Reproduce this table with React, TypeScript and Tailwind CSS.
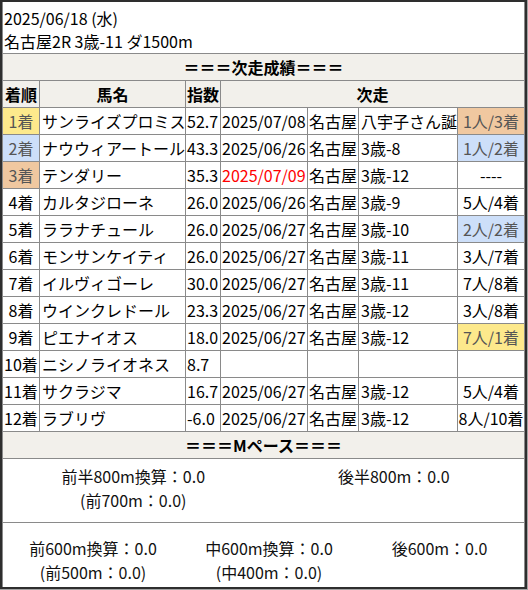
import React from "react";

type Row = {
  rank: string;
  rankBg?: string;
  name: string;
  idx: string;
  date?: string;
  dateRed?: boolean;
  place?: string;
  race?: string;
  res?: string;
  resBg?: string;
};

const Y = "bg-[#fde98c]";
const B = "bg-[#cddff9]";
const T = "bg-[#f0c8a0]";

const rows: Row[] = [
  { rank: "1着", rankBg: Y, name: "サンライズプロミス", idx: "52.7", date: "2025/07/08", place: "名古屋", race: "八宇子さん誕", res: "1人/3着", resBg: T },
  { rank: "2着", rankBg: B, name: "ナウウィアートール", idx: "43.3", date: "2025/06/26", place: "名古屋", race: "3歳-8", res: "1人/2着", resBg: B },
  { rank: "3着", rankBg: T, name: "テンダリー", idx: "35.3", date: "2025/07/09", dateRed: true, place: "名古屋", race: "3歳-12", res: "----" },
  { rank: "4着", name: "カルタジローネ", idx: "26.0", date: "2025/06/26", place: "名古屋", race: "3歳-9", res: "5人/4着" },
  { rank: "5着", name: "ララナチュール", idx: "26.0", date: "2025/06/27", place: "名古屋", race: "3歳-10", res: "2人/2着", resBg: B },
  { rank: "6着", name: "モンサンケイティ", idx: "26.0", date: "2025/06/27", place: "名古屋", race: "3歳-11", res: "3人/7着" },
  { rank: "7着", name: "イルヴィゴーレ", idx: "30.0", date: "2025/06/27", place: "名古屋", race: "3歳-11", res: "7人/8着" },
  { rank: "8着", name: "ウインクレドール", idx: "23.3", date: "2025/06/27", place: "名古屋", race: "3歳-12", res: "3人/8着" },
  { rank: "9着", name: "ピエナイオス", idx: "18.0", date: "2025/06/27", place: "名古屋", race: "3歳-12", res: "7人/1着", resBg: Y },
  { rank: "10着", name: "ニシノライオネス", idx: "8.7" },
  { rank: "11着", name: "サクラジマ", idx: "16.7", date: "2025/06/27", place: "名古屋", race: "3歳-12", res: "5人/4着" },
  { rank: "12着", name: "ラブリヴ", idx: "-6.0", date: "2025/06/27", place: "名古屋", race: "3歳-12", res: "8人/10着" },
];

const cell = "h-full flex items-center border-r border-[#8a8a8a] whitespace-nowrap overflow-hidden";

export default function App() {
  return (
    <div
      className="w-[528px] h-[590px] bg-[#a3a3a3] pr-px pb-px text-[16px] text-black"
      style={{ fontFamily: '"Noto Sans CJK JP", "Noto Sans", sans-serif' }}
    >
      <div className="h-full border-2 border-[#2e2e2e] bg-white">
        <div className="h-full border-l border-r border-[#8a8a8a] flex flex-col">
          {/* header */}
          <div className="h-[52px] border-b border-[#8a8a8a] pl-px pt-[5px] leading-[23px]">
            <div>2025/06/18 (水)</div>
            <div>名古屋2R 3歳-11 ダ1500m</div>
          </div>
          <div className="h-[27px] border-b border-[#8a8a8a] bg-[#f2f0eb] flex items-center justify-center font-bold">
            ＝＝＝次走成績＝＝＝
          </div>
          <div className="h-[27px] border-b border-[#8a8a8a] bg-[#f2f0eb] flex font-bold">
            <div className={`${cell} w-[37px] justify-center`}>着順</div>
            <div className={`${cell} w-[146px] justify-center`}>馬名</div>
            <div className={`${cell} w-[35px] justify-center`}>指数</div>
            <div className="h-full flex-1 flex items-center justify-center">次走</div>
          </div>
          {rows.map((r, i) => (
            <div key={i} className="h-[27px] border-b border-[#8a8a8a] flex">
              <div className={`${cell} w-[37px] justify-center ${r.rankBg ?? ""} ${r.rankBg ? "text-[#555]" : ""}`}>
                {r.rank}
              </div>
              <div className={`${cell} w-[146px] pl-[2px]`}>{r.name}</div>
              <div className={`${cell} w-[35px] pl-px`}>{r.idx}</div>
              <div className={`${cell} w-[87px] pl-px ${r.dateRed ? "text-[#ff0000]" : ""}`}>{r.date ?? ""}</div>
              <div className={`${cell} w-[51px] pl-px`}>{r.place ?? ""}</div>
              <div className={`${cell} w-[99px] pl-[2px]`}>{r.race ?? ""}</div>
              <div
                className={`h-full flex-1 flex items-center justify-center whitespace-nowrap overflow-hidden ${r.resBg ?? ""} ${r.resBg ? "text-[#555]" : ""}`}
              >
                {r.res ?? ""}
              </div>
            </div>
          ))}
          <div className="h-[27px] border-b border-[#8a8a8a] bg-[#f2f0eb] flex items-center justify-center font-bold">
            ＝＝＝Mペース＝＝＝
          </div>
          <div className="h-[64px] border-b border-[#8a8a8a] grid grid-cols-2 pt-[5px] leading-[24px] text-[#111]">
            <div className="flex flex-col items-center">
              <div>前半800m換算：0.0</div>
              <div>(前700m：0.0)</div>
            </div>
            <div className="flex flex-col items-center">
              <div>後半800m：0.0</div>
            </div>
          </div>
          <div className="flex-1 grid grid-cols-[180px_172px_1fr] pt-[13px] leading-[24px] text-[#111]">
            <div className="flex flex-col items-center">
              <div>前600m換算：0.0</div>
              <div>(前500m：0.0)</div>
            </div>
            <div className="flex flex-col items-center">
              <div>中600m換算：0.0</div>
              <div>(中400m：0.0)</div>
            </div>
            <div className="flex flex-col items-center">
              <div>後600m：0.0</div>
            </div>
          </div>
        </div>
      </div>
    </div>
  );
}
